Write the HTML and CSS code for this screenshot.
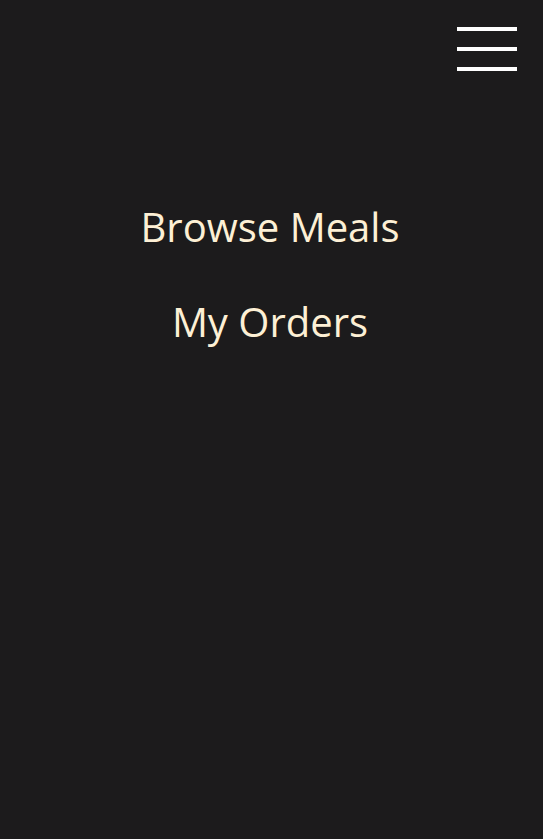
FILE: index.html
```html
<!DOCTYPE html>
<html lang="en">
<head>
<meta charset="utf-8">
<title>Menu</title>
<link rel="stylesheet" href="styles.css">
</head>
<body>
<div class="page">
  <header class="topbar">
    <button class="burger" aria-label="Menu">
      <span class="bar"></span>
      <span class="bar"></span>
      <span class="bar"></span>
    </button>
  </header>
  <nav class="menu">
    <a class="menu-link" href="#">Browse Meals</a>
    <a class="menu-link" href="#">My Orders</a>
  </nav>
</div>
</body>
</html>
```
FILE: styles.css
```css
html, body {
  margin: 0;
  padding: 0;
  background: #1c1b1c;
}
.page {
  min-height: 839px;
  background: #1c1b1c;
  font-family: "Open Sans", "Noto Sans", sans-serif;
}
.topbar {
  display: flex;
  justify-content: flex-end;
  padding: 27px 26px 0 0;
}
.burger {
  display: flex;
  flex-direction: column;
  gap: 16px;
  padding: 0;
  margin: 0;
  border: 0;
  background: none;
  width: 60px;
}
.bar {
  display: block;
  width: 60px;
  height: 4px;
  background: #ffffff;
}
.menu {
  display: flex;
  flex-direction: column;
  align-items: center;
  padding-top: 128px;
  padding-right: 3px;
  gap: 40px;
}
.menu-link {
  color: #fdf0d5;
  text-decoration: none;
  font-size: 40px;
  line-height: 55px;
}
```
